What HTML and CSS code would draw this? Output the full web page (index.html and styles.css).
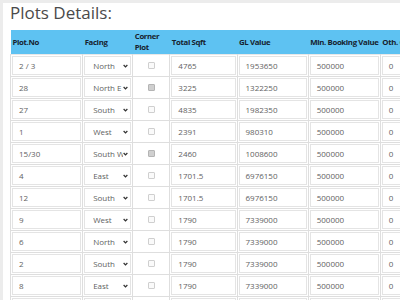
FILE: index.html
```html
<!DOCTYPE html>
<html>
<head>
<meta charset="utf-8">
<link rel="stylesheet" href="styles.css">
</head>
<body>
<div class="panel">
  <h2 class="title">Plots Details:</h2>
  <table class="plots">
    <colgroup>
      <col class="c-no"><col class="c-facing"><col class="c-corner"><col class="c-sqft"><col class="c-gl"><col class="c-min"><col class="c-oth">
    </colgroup>
    <thead>
      <tr><th>Plot.No</th><th>Facing</th><th class="wrap">Corner Plot</th><th>Total Sqft</th><th>GL Value</th><th>Min. Booking Value</th><th>Oth. Charges</th></tr>
    </thead>
    <tbody>
      <tr><td><div class="inp">2 / 3</div></td><td><div class="sel"><span>North</span><svg viewBox="0 0 8 6"><path d="M1 1.5 4 4.5 7 1.5" /></svg></div></td><td class="cb"><span class="box"></span></td><td><div class="inp">4765</div></td><td><div class="inp">1953650</div></td><td><div class="inp">500000</div></td><td><div class="inp">0</div></td></tr>
      <tr><td><div class="inp">28</div></td><td><div class="sel"><span>North E</span><svg viewBox="0 0 8 6"><path d="M1 1.5 4 4.5 7 1.5" /></svg></div></td><td class="cb"><span class="box on"></span></td><td><div class="inp">3225</div></td><td><div class="inp">1322250</div></td><td><div class="inp">500000</div></td><td><div class="inp">0</div></td></tr>
      <tr><td><div class="inp">27</div></td><td><div class="sel"><span>South</span><svg viewBox="0 0 8 6"><path d="M1 1.5 4 4.5 7 1.5" /></svg></div></td><td class="cb"><span class="box"></span></td><td><div class="inp">4835</div></td><td><div class="inp">1982350</div></td><td><div class="inp">500000</div></td><td><div class="inp">0</div></td></tr>
      <tr><td><div class="inp">1</div></td><td><div class="sel"><span>West</span><svg viewBox="0 0 8 6"><path d="M1 1.5 4 4.5 7 1.5" /></svg></div></td><td class="cb"><span class="box"></span></td><td><div class="inp">2391</div></td><td><div class="inp">980310</div></td><td><div class="inp">500000</div></td><td><div class="inp">0</div></td></tr>
      <tr><td><div class="inp">15/30</div></td><td><div class="sel"><span>South W</span><svg viewBox="0 0 8 6"><path d="M1 1.5 4 4.5 7 1.5" /></svg></div></td><td class="cb"><span class="box on"></span></td><td><div class="inp">2460</div></td><td><div class="inp">1008600</div></td><td><div class="inp">500000</div></td><td><div class="inp">0</div></td></tr>
      <tr><td><div class="inp">4</div></td><td><div class="sel"><span>East</span><svg viewBox="0 0 8 6"><path d="M1 1.5 4 4.5 7 1.5" /></svg></div></td><td class="cb"><span class="box"></span></td><td><div class="inp">1701.5</div></td><td><div class="inp">6976150</div></td><td><div class="inp">500000</div></td><td><div class="inp">0</div></td></tr>
      <tr><td><div class="inp">12</div></td><td><div class="sel"><span>South</span><svg viewBox="0 0 8 6"><path d="M1 1.5 4 4.5 7 1.5" /></svg></div></td><td class="cb"><span class="box"></span></td><td><div class="inp">1701.5</div></td><td><div class="inp">6976150</div></td><td><div class="inp">500000</div></td><td><div class="inp">0</div></td></tr>
      <tr><td><div class="inp">9</div></td><td><div class="sel"><span>West</span><svg viewBox="0 0 8 6"><path d="M1 1.5 4 4.5 7 1.5" /></svg></div></td><td class="cb"><span class="box"></span></td><td><div class="inp">1790</div></td><td><div class="inp">7339000</div></td><td><div class="inp">500000</div></td><td><div class="inp">0</div></td></tr>
      <tr><td><div class="inp">6</div></td><td><div class="sel"><span>North</span><svg viewBox="0 0 8 6"><path d="M1 1.5 4 4.5 7 1.5" /></svg></div></td><td class="cb"><span class="box"></span></td><td><div class="inp">1790</div></td><td><div class="inp">7339000</div></td><td><div class="inp">500000</div></td><td><div class="inp">0</div></td></tr>
      <tr><td><div class="inp">2</div></td><td><div class="sel"><span>South</span><svg viewBox="0 0 8 6"><path d="M1 1.5 4 4.5 7 1.5" /></svg></div></td><td class="cb"><span class="box"></span></td><td><div class="inp">1790</div></td><td><div class="inp">7339000</div></td><td><div class="inp">500000</div></td><td><div class="inp">0</div></td></tr>
      <tr><td><div class="inp">8</div></td><td><div class="sel"><span>East</span><svg viewBox="0 0 8 6"><path d="M1 1.5 4 4.5 7 1.5" /></svg></div></td><td class="cb"><span class="box"></span></td><td><div class="inp">1790</div></td><td><div class="inp">7339000</div></td><td><div class="inp">500000</div></td><td><div class="inp">0</div></td></tr>
      <tr><td><div class="inp">5</div></td><td><div class="sel"><span>East</span><svg viewBox="0 0 8 6"><path d="M1 1.5 4 4.5 7 1.5" /></svg></div></td><td class="cb"><span class="box"></span></td><td><div class="inp">1790</div></td><td><div class="inp">7339000</div></td><td><div class="inp">500000</div></td><td><div class="inp">0</div></td></tr>
    </tbody>
  </table>
</div>
</body>
</html>
```
FILE: styles.css
```css
html, body {
  margin: 0;
  padding: 0;
  width: 400px;
  height: 300px;
  overflow: hidden;
  background: #ececec;
}
body {
  font-family: "Open Sans", "Liberation Sans", sans-serif;
}
.panel {
  margin: 3px 0 0 3px;
  padding: 0 0 0 7px;
  background: #fff;
  height: 297px;
  overflow: hidden;
}
.title {
  margin: 0;
  padding: 0;
  height: 27px;
  font-size: 17px;
  font-weight: 400;
  line-height: 20px;
  color: #4a4a4a;
}
.plots {
  border-collapse: collapse;
  table-layout: fixed;
  width: 430px;
  font-size: 8px;
}
.c-no { width: 72px; }
.c-facing { width: 50px; }
.c-corner { width: 37px; }
.c-sqft { width: 67px; }
.c-gl { width: 71px; }
.c-min { width: 72px; }
.c-oth { width: 59px; }
.plots th {
  background: #5ec2f2;
  color: #17222f;
  font-size: 7.8px;
  font-weight: 700;
  letter-spacing: -0.35px;
  text-align: left;
  line-height: 11px;
  height: 24px;
  padding: 0 0 0 2px;
  white-space: nowrap;
  overflow: hidden;
  border: 0;
}
.plots th.wrap {
  white-space: normal;
}
.plots td {
  border: 1px solid #dedede;
  padding: 1px;
  height: 19px;
  line-height: 19px;
}
.plots thead + tbody tr:first-child td {
  border-top-color: #e8e8e8;
}
.inp {
  box-sizing: border-box;
  height: 19px;
  border: 1px solid #e4e4e4;
  padding: 0 6px;
  font-size: 8px;
  line-height: 17px;
  color: #626262;
  white-space: nowrap;
  overflow: hidden;
}
.sel {
  box-sizing: border-box;
  height: 19px;
  display: flex;
  align-items: center;
  border: 1px solid #e4e4e4;
  padding: 0 2px 0 8px;
  font-size: 8px;
  color: #626262;
  white-space: nowrap;
  overflow: hidden;
}
.sel span {
  overflow: hidden;
  flex: 1;
}
.sel svg {
  width: 5px;
  height: 4px;
  flex: none;
  fill: none;
  stroke: #333;
  stroke-width: 2;
}
.cb {
  text-align: center;
  font-size: 0;
}
.box {
  display: inline-block;
  box-sizing: border-box;
  width: 7px;
  height: 7px;
  border: 1px solid #cfcfcf;
  border-radius: 1px;
  background: #fafafa;
  vertical-align: middle;
}
.box.on {
  background: #cfcfcf;
  border-color: #b4b4b4;
}
```
